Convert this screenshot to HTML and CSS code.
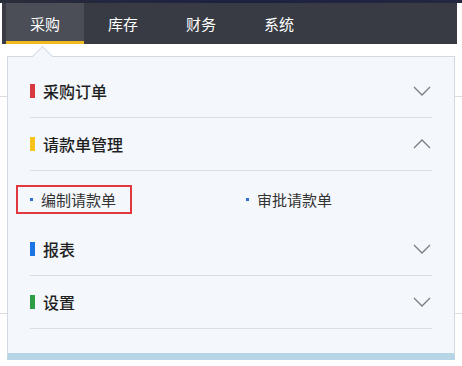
FILE: index.html
```html
<!DOCTYPE html>
<html lang="zh-CN">
<head>
  <meta charset="UTF-8">
  <meta name="viewport" content="width=device-width, initial-scale=1.0">
  <title>采购 - 菜单</title>
  <link rel="stylesheet" href="styles.css">
</head>
<body>
  <div class="topline"></div>
  <nav class="navbar">
    <div class="tab active">采购</div>
    <div class="tab">库存</div>
    <div class="tab">财务</div>
    <div class="tab">系统</div>
  </nav>

  <!-- 页面内容（被下拉菜单遮住） -->
  <div class="content">
    <div class="bg-row first"></div>
    <div class="bg-row second"></div>
  </div>

  <div class="dropdown">
    <div class="section">
      <div class="title"><span class="bar red"></span>采购订单</div>
      <svg class="chevron" width="18" height="10" viewBox="0 0 18 10"><polyline points="1,1 9,9 17,1" /></svg>
    </div>

    <div class="section">
      <div class="title"><span class="bar yellow"></span>请款单管理</div>
      <svg class="chevron" width="18" height="10" viewBox="0 0 18 10"><polyline points="1,9 9,1 17,9" /></svg>
    </div>

    <div class="subitems">
      <div class="subitem selected"><span class="dot"></span>编制请款单</div>
      <div class="subitem"><span class="dot"></span>审批请款单</div>
    </div>

    <div class="section">
      <div class="title"><span class="bar blue"></span>报表</div>
      <svg class="chevron" width="18" height="10" viewBox="0 0 18 10"><polyline points="1,1 9,9 17,1" /></svg>
    </div>

    <div class="section">
      <div class="title"><span class="bar green"></span>设置</div>
      <svg class="chevron" width="18" height="10" viewBox="0 0 18 10"><polyline points="1,1 9,9 17,1" /></svg>
    </div>
  </div>
</body>
</html>
```

FILE: styles.css
```css
* {
  margin: 0;
  padding: 0;
  box-sizing: border-box;
}

body {
  background: #ffffff;
  font-family: "Noto Sans CJK SC", "Noto Sans", sans-serif;
  width: 462px;
  height: 366px;
  position: relative;
  overflow: hidden;
}

.topline {
  height: 3px;
  background: linear-gradient(90deg, #2a2d3a 0%, #1d2142 50%, #23273f 100%);
}

.navbar {
  display: flex;
  height: 41px;
  margin: 0 5px 0 2px;
  padding-left: 4px;
  background: #383b43;
}

.tab {
  width: 78px;
  height: 41px;
  padding-top: 4px;
  line-height: 34px;
  text-align: center;
  color: #ffffff;
  font-size: 15px;
  border-bottom: 3px solid transparent;
}

.tab.active {
  background: #4b4e56;
  border-bottom-color: #f2b91e;
}

.content {
  padding-top: 52px;
}

.bg-row {
  border-bottom: 1px solid #dcdcdc;
}

.bg-row.first {
  height: 1px;
}

.bg-row.second {
  height: 217px;
}

.dropdown {
  position: absolute;
  left: 7px;
  top: 56px;
  width: 448px;
  background: #f4f7fc;
  border: 1px solid #d3d9e3;
  border-bottom: 7px solid #b6d6e7;
  padding: 8px 22px 24px 22px;
}

.dropdown::before {
  content: '';
  position: absolute;
  left: 27px;
  top: -8px;
  width: 14px;
  height: 14px;
  background: #f4f7fc;
  border-top: 1px solid #d3d9e3;
  border-left: 1px solid #d3d9e3;
  transform: rotate(45deg);
}

.section {
  display: flex;
  align-items: center;
  justify-content: space-between;
  height: 53px;
  border-bottom: 1px solid #d8dee8;
}

.title {
  display: flex;
  align-items: center;
  font-size: 16px;
  font-weight: 500;
  color: #1f1f1f;
}

.bar {
  width: 5px;
  height: 14px;
  margin-right: 8px;
}

.bar.red { background: #d8383f; }
.bar.yellow { background: #f6c21b; }
.bar.blue { background: #1b74e4; }
.bar.green { background: #2e9e45; }

.chevron {
  margin-right: 1px;
}

.chevron polyline {
  fill: none;
  stroke: #7a7d85;
  stroke-width: 1.3;
}

.subitems {
  display: grid;
  grid-template-columns: 216px 1fr;
  height: 52px;
  padding-top: 14px;
}

.subitem {
  display: flex;
  align-items: center;
  height: 29px;
  font-size: 15px;
  color: #333333;
}

.subitem.selected {
  justify-self: start;
  margin-left: -14px;
  padding: 0 14px 0 12px;
  border: 2px solid #e0383e;
}

.dot {
  width: 3px;
  height: 3px;
  margin-right: 8px;
  background: #2f6fd0;
}
```
